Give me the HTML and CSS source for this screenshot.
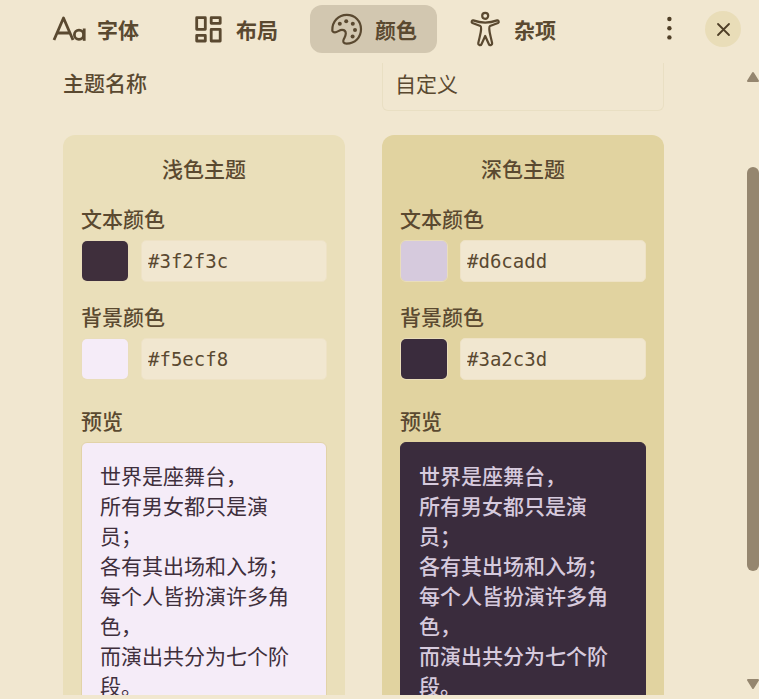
FILE: index.html
```
<!DOCTYPE html>
<html lang="zh-CN">
<head>
    <meta charset="UTF-8">
    <meta name="viewport" content="width=device-width, initial-scale=1.0">
    <title>自定义主题</title>
    <link rel="stylesheet" href="styles.css">
</head>
<body>
    <header class="header">
        <nav class="tabs">
            <button class="tab">
                <svg class="icon" viewBox="0 0 32 32" fill="none" stroke="currentColor" stroke-width="2.8" stroke-linejoin="round">
                    <path d="M1 27 L10.5 5 L20 27 M4.5 20 H16.5"/>
                    <circle cx="26" cy="21.8" r="4.6"/>
                    <path d="M31.2 15.5 V27.8"/>
                </svg>
                字体
            </button>
            <button class="tab">
                <svg class="icon" viewBox="0 0 32 32" fill="none" stroke="currentColor" stroke-width="2.8" stroke-linejoin="round">
                    <rect x="4.7" y="4.7" width="8.6" height="11.6"/>
                    <rect x="19.2" y="4.7" width="9" height="5.6"/>
                    <rect x="4.7" y="22.4" width="8.6" height="5.6"/>
                    <rect x="19.2" y="16.4" width="9" height="11.6"/>
                </svg>
                布局
            </button>
            <button class="tab active">
                <svg class="icon" viewBox="0 0 32 32" fill="none" stroke="currentColor" stroke-width="2.2" stroke-linejoin="round">
                    <path d="M1.3 17.5 C1 8.5 7.5 1.8 15.8 1.8 C24 1.8 30 8 30 16 C30 24.5 24 30.6 15.5 30.6 C12.5 30.6 11.6 28.8 12.6 26.6 C13.6 24.4 14.8 22.5 14.8 20.6 C14.8 18.4 13.2 16.8 11 16.8 C8.2 16.8 6.6 19.3 4 19.3 C2.3 19.3 1.4 18.8 1.3 17.5 Z"/>
                    <g fill="currentColor" stroke="none">
                        <circle cx="8.8" cy="10.8" r="2"/>
                        <circle cx="15.2" cy="8.2" r="2"/>
                        <circle cx="21.8" cy="10.8" r="2"/>
                        <circle cx="24" cy="17" r="2"/>
                        <circle cx="21.6" cy="23.4" r="2"/>
                    </g>
                </svg>
                颜色
            </button>
            <button class="tab">
                <svg class="icon tall" viewBox="0 0 32 36" fill="none" stroke="currentColor" stroke-width="2.2" stroke-linejoin="round">
                    <circle cx="15.2" cy="4.8" r="3"/>
                    <path d="M3.2 9.4 C1.8 9 1 11.2 2.4 12 L10.4 15 C11.2 15.4 11.2 16.4 11.1 18 C11 22 9.5 26 8.3 32 C8 34.4 10.9 34.8 11.6 33 L15.2 25 L18.8 33 C19.5 34.8 22.4 34.4 22.1 32 C20.9 26 19.4 22 19.3 18 C19.2 16.4 19.2 15.4 20 15 L28 12 C29.4 11.2 28.6 9 27.2 9.4 C19.5 12.2 10.9 12.2 3.2 9.4 Z"/>
                </svg>
                杂项
            </button>
        </nav>
        <div class="actions">
            <button class="action" aria-label="更多">
                <svg width="36" height="36" viewBox="0 0 36 36" fill="currentColor">
                    <circle cx="18.4" cy="8" r="2.2"/>
                    <circle cx="18.4" cy="17.2" r="2.2"/>
                    <circle cx="18.4" cy="26.4" r="2.2"/>
                </svg>
            </button>
            <button class="action close" aria-label="关闭">
                <svg width="36" height="36" viewBox="0 0 36 36" fill="none" stroke="currentColor" stroke-width="1.8" stroke-linecap="round">
                    <path d="M13 13 L24 24 M24 13 L13 24"/>
                </svg>
            </button>
        </div>
    </header>

    <div class="body">
        <main class="content">
            <div class="columns">
                <label class="label name-label" for="themeName">主题名称</label>
                <input class="name-input" type="text" id="themeName" value="自定义">
            </div>

            <div class="columns">
                <section class="card light">
                    <h2 class="card-title">浅色主题</h2>
                    <div class="field">
                        <label class="label" for="lightText">文本颜色</label>
                        <div class="color-row">
                            <input class="swatch" type="color" value="#3f2f3c" aria-label="浅色文本颜色">
                            <input class="hex" type="text" id="lightText" value="#3f2f3c">
                        </div>
                    </div>
                    <div class="field">
                        <label class="label" for="lightBg">背景颜色</label>
                        <div class="color-row">
                            <input class="swatch" type="color" value="#f5ecf8" aria-label="浅色背景颜色">
                            <input class="hex" type="text" id="lightBg" value="#f5ecf8">
                        </div>
                    </div>
                    <h3 class="label preview-label">预览</h3>
                    <div class="preview">
                        世界是座舞台，<br>
                        所有男女都只是演员；<br>
                        各有其出场和入场；<br>
                        每个人皆扮演许多角色，<br>
                        而演出共分为七个阶段。
                    </div>
                </section>

                <section class="card dark">
                    <h2 class="card-title">深色主题</h2>
                    <div class="field">
                        <label class="label" for="darkText">文本颜色</label>
                        <div class="color-row">
                            <input class="swatch" type="color" value="#d6cadd" aria-label="深色文本颜色">
                            <input class="hex" type="text" id="darkText" value="#d6cadd">
                        </div>
                    </div>
                    <div class="field">
                        <label class="label" for="darkBg">背景颜色</label>
                        <div class="color-row">
                            <input class="swatch" type="color" value="#3a2c3d" aria-label="深色背景颜色">
                            <input class="hex" type="text" id="darkBg" value="#3a2c3d">
                        </div>
                    </div>
                    <h3 class="label preview-label">预览</h3>
                    <div class="preview">
                        世界是座舞台，<br>
                        所有男女都只是演员；<br>
                        各有其出场和入场；<br>
                        每个人皆扮演许多角色，<br>
                        而演出共分为七个阶段。
                    </div>
                </section>
            </div>
        </main>

        <div class="scrollbar">
            <svg width="12" height="12" viewBox="0 0 12 12"><path d="M6 2 L11 10 H1 Z"/></svg>
            <div class="track"><div class="thumb"></div></div>
            <svg width="12" height="12" viewBox="0 0 12 12"><path d="M6 9 L11 1 H1 Z"/></svg>
        </div>
    </div>
</body>
</html>
```
FILE: styles.css
```
* {
    box-sizing: border-box;
}
body {
    margin: 0;
    height: 100vh;
    display: flex;
    flex-direction: column;
    overflow: hidden;
    background-color: #f1e7d0;
    color: #5a4930;
    font-family: "Noto Sans CJK SC", sans-serif;
    font-size: 21px;
    line-height: 30px;
}
button, input {
    font: inherit;
    color: inherit;
}

/* Header */
.header {
    display: flex;
    justify-content: space-between;
    align-items: center;
    padding: 5px 18px 5px 32px;
}
.tabs {
    display: flex;
    gap: 12px;
}
.tab {
    display: flex;
    align-items: center;
    gap: 12px;
    height: 48px;
    padding: 0 20px 0 21px;
    border: none;
    border-radius: 12px;
    background: none;
    font-weight: bold;
    white-space: nowrap;
    cursor: pointer;
}
.tab.active {
    background-color: #d2c7b0;
}
.icon {
    width: 32px;
    height: 32px;
    flex: none;
    overflow: visible;
}
.icon.tall {
    height: 36px;
}
.actions {
    display: flex;
    gap: 18px;
}
.action {
    width: 36px;
    height: 36px;
    padding: 0;
    border: none;
    border-radius: 50%;
    background: none;
    color: #4f3f27;
    cursor: pointer;
}
.action svg {
    display: block;
}
.close {
    background-color: #e9ddb8;
}

/* Scrolling area */
.body {
    flex: 1;
    min-height: 0;
    display: flex;
    padding: 5px 0 4px;
}
.content {
    flex: 1;
    overflow: hidden;
    padding: 0 83px 0 63px;
}
.columns {
    display: grid;
    grid-template-columns: 1fr 1fr;
    column-gap: 37px;
    margin-bottom: 24px;
}
.label {
    display: block;
    margin: 0;
    font-size: 21px;
    font-weight: 500;
}
.name-label {
    padding-top: 4px;
}
.name-input {
    width: 100%;
    height: 48px;
    padding: 0 12px 7px;
    border: 1px solid #e9dfc3;
    border-top: none;
    border-radius: 0 0 6px 6px;
    background: none;
}

/* Theme cards */
.card {
    min-width: 0;
    padding: 18px;
    border-radius: 12px;
}
.card.light {
    background-color: #eadfba;
}
.card.dark {
    background-color: #e1d3a0;
}
.card-title {
    margin: 0 0 20px;
    font-size: 21px;
    font-weight: 500;
    text-align: center;
}
.field {
    margin-bottom: 19px;
}
.color-row {
    display: flex;
    gap: 12px;
    margin-top: 7px;
}
.swatch {
    width: 48px;
    height: 42px;
    flex: none;
    padding: 0;
    border: 1px solid #e9ddbb;
    border-radius: 6px;
    background: none;
    overflow: hidden;
}
.swatch::-webkit-color-swatch-wrapper {
    padding: 0;
}
.swatch::-webkit-color-swatch {
    border: none;
}
.hex {
    flex: 1;
    min-width: 0;
    padding: 0 6px;
    border: 1px solid #eee2c5;
    border-radius: 5px;
    background-color: #f1e7d0;
    font-family: "DejaVu Sans Mono", monospace;
    font-size: 19px;
}
.preview-label {
    margin: 25px 0 7px;
}
.preview {
    padding: 17px 18px;
    border: 1px solid #e2d3a8;
    border-radius: 6px;
}
.light .preview {
    background-color: #f5ecf8;
    color: #3f2f3c;
}
.dark .preview {
    border-color: #3a2c3d;
    background-color: #3a2c3d;
    color: #d6cadd;
    font-weight: 500;
}

/* Scrollbar */
.scrollbar {
    width: 12px;
    display: flex;
    flex-direction: column;
    padding: 8px 0 4px;
}
.scrollbar svg {
    fill: #95866f;
    stroke: #95866f;
    stroke-width: 2;
    stroke-linejoin: round;
}
.track {
    flex: 1;
    padding: 84px 0 108px;
}
.thumb {
    height: 100%;
    border-radius: 6px;
    background-color: #95866f;
}
```
